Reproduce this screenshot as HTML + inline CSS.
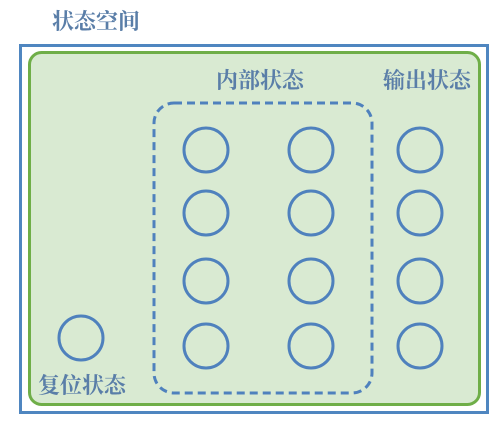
<!DOCTYPE html><html><head><meta charset="utf-8"><style>
body{margin:0;width:502px;height:428px;background:#fff;overflow:hidden}
svg text{font-family:"Liberation Serif","Noto Serif CJK SC",serif;font-weight:bold;fill:#5a7ea8}
</style></head><body>
<svg width="502" height="428" xmlns="http://www.w3.org/2000/svg">
<text x="52" y="29" font-size="22">状态空间</text>
<rect x="20.5" y="45.5" width="467" height="367" fill="#fff" stroke="#4f86c0" stroke-width="3"/>
<rect x="29.5" y="52.5" width="450" height="352" rx="12" fill="#d9ead2" stroke="#6fae48" stroke-width="3"/>
<text x="216" y="88" font-size="22">内部状态</text>
<text x="383" y="88" font-size="22">输出状态</text>
<text x="38" y="393" font-size="22">复位状态</text>
<rect x="154" y="103" width="218" height="290" rx="20" fill="none" stroke="#4f81bd" stroke-width="3" stroke-dasharray="8,5"/>
<g fill="none" stroke="#4f81bd" stroke-width="3">
<circle cx="206" cy="150" r="22"/><circle cx="311" cy="150" r="22"/><circle cx="420" cy="150" r="22"/>
<circle cx="206" cy="213" r="22"/><circle cx="311" cy="213" r="22"/><circle cx="420" cy="213" r="22"/>
<circle cx="206" cy="281" r="22"/><circle cx="311" cy="281" r="22"/><circle cx="420" cy="281" r="22"/>
<circle cx="206" cy="346" r="22"/><circle cx="311" cy="346" r="22"/><circle cx="420" cy="346" r="22"/>
<circle cx="81" cy="338" r="22"/>
</g>
</svg>
</body></html>
